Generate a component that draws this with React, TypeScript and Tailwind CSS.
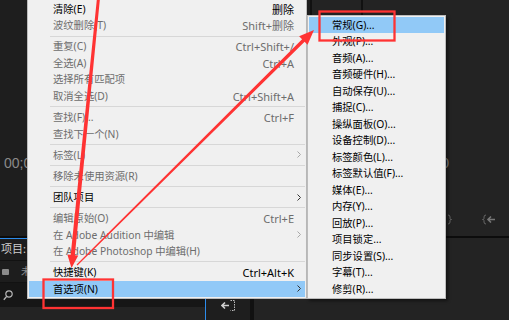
import React from 'react';

type Row = { label: string; shortcut?: string; disabled?: boolean; sub?: boolean; active?: boolean } | 'sep';

const editMenu: Row[] = [
  { label: '清除(E)', shortcut: '删除' },
  { label: '波纹删除(T)', shortcut: 'Shift+删除', disabled: true },
  'sep',
  { label: '重复(C)', shortcut: 'Ctrl+Shift+/', disabled: true },
  { label: '全选(A)', shortcut: 'Ctrl+A', disabled: true },
  { label: '选择所有匹配项', disabled: true },
  { label: '取消全选(D)', shortcut: 'Ctrl+Shift+A', disabled: true },
  'sep',
  { label: '查找(F)...', shortcut: 'Ctrl+F', disabled: true },
  { label: '查找下一个(N)', disabled: true },
  'sep',
  { label: '标签(L)', sub: true, disabled: true },
  'sep',
  { label: '移除未使用资源(R)', disabled: true },
  'sep',
  { label: '团队项目', sub: true },
  'sep',
  { label: '编辑原始(O)', shortcut: 'Ctrl+E', disabled: true },
  { label: '在 Adobe Audition 中编辑', sub: true, disabled: true },
  { label: '在 Adobe Photoshop 中编辑(H)', disabled: true },
  'sep',
  { label: '快捷键(K)', shortcut: 'Ctrl+Alt+K' },
  { label: '首选项(N)', sub: true, active: true },
];

const prefs = [
  '常规(G)...',
  '外观(P)...',
  '音频(A)...',
  '音频硬件(H)...',
  '自动保存(U)...',
  '捕捉(C)...',
  '操纵面板(O)...',
  '设备控制(D)...',
  '标签颜色(L)...',
  '标签默认值(F)...',
  '媒体(E)...',
  '内存(Y)...',
  '回放(P)...',
  '项目锁定...',
  '同步设置(S)...',
  '字幕(T)...',
  '修剪(R)...',
];

const Chevron = ({ dim }: { dim?: boolean }) => (
  <svg width="4" height="7" viewBox="0 0 4 7" className="block">
    <path d="M0.5 0.5 L3.5 3.5 L0.5 6.5" fill="none" stroke={dim ? '#a8a8a8' : '#333'} strokeWidth="1" />
  </svg>
);

// tapered annotation arrow, computed from its two ends
const arrowPoints = (x1: number, y1: number, x2: number, y2: number, w1: number, w2: number, hl: number, hw: number) => {
  const len = Math.hypot(x2 - x1, y2 - y1);
  const ux = (x2 - x1) / len;
  const uy = (y2 - y1) / len;
  const nx = -uy;
  const ny = ux;
  const bx = x2 - ux * hl;
  const by = y2 - uy * hl;
  const p = (x: number, y: number, w: number, s: number) => `${x + s * nx * w / 2},${y + s * ny * w / 2}`;
  return [
    p(x1, y1, w1, 1),
    p(bx, by, w2, 1),
    p(bx, by, hw, 1),
    `${x2},${y2}`,
    p(bx, by, hw, -1),
    p(bx, by, w2, -1),
    p(x1, y1, w1, -1),
  ].join(' ');
};

export default function App() {
  return (
    <div className="relative w-[509px] h-[320px] overflow-hidden bg-[#111] font-['Noto_Sans','Noto_Sans_CJK_SC',sans-serif]">
      {/* Premiere workspace behind the menus */}
      <div className="flex flex-col h-full">
        <div className="flex h-[236px]">
          {/* source monitor */}
          <div className="w-[310px] bg-[#1e1e1e] pt-[153px] pl-[4px] text-[14px] text-[#8a8a8a] font-['Liberation_Sans',sans-serif]">
            00;00;00;00
          </div>
          <div className="w-[2px] bg-[#111]" />
          <div className="w-[49px] bg-[#232323]" />
          <div className="w-[2px] bg-[#111]" />
          {/* program monitor */}
          <div className="flex-1 bg-[#232323] flex flex-col">
            <div className="pt-[153px] pl-[12px] text-[14px] text-[#8a8a8a] font-['Liberation_Sans',sans-serif]">
              00;00;00;00
            </div>
            <div className="mt-auto mb-[11px] flex items-center pl-[84px] gap-[30px] text-[#6a6a6a]">
              <svg width="5" height="11" viewBox="0 0 5 11">
                <path d="M1 1 Q3 1 3 3 L3 4.5 Q3 5.5 4.5 5.5 Q3 5.5 3 6.5 L3 8 Q3 10 1 10" fill="none" stroke="#666" strokeWidth="1" />
              </svg>
              <svg width="14" height="11" viewBox="0 0 14 11">
                <path d="M4 1 Q2 1 2 3 L2 4.5 Q2 5.5 0.5 5.5 Q2 5.5 2 6.5 L2 8 Q2 10 4 10" fill="none" stroke="#666" strokeWidth="1" />
                <path d="M6 5.5 L13 5.5 M9 2.5 L6 5.5 L9 8.5" fill="none" stroke="#777" strokeWidth="1.6" />
              </svg>
            </div>
          </div>
        </div>
        <div className="h-[2px] bg-[#0c0c0c]" />
        <div className="flex flex-1">
          {/* project panel */}
          <div className="w-[205px] flex flex-col bg-[#1d1d1d] border-t border-[#2d8ceb]">
            <div className="h-[22px] flex items-center text-[11px] text-[#cfcfcf] border-b border-[#121212] pl-[1px]">
              项目: 未命名
            </div>
            <div className="h-[22px] flex items-center gap-[12px] pl-[2px] border-b border-[#121212]">
              <div className="w-[7px] h-[6px] rounded-[1px] bg-[#8a8a8a]" />
              <span className="text-[10px] text-[#8a8a8a]">未命名.prproj</span>
            </div>
            <div className="h-[24px] bg-[#161616] flex items-center pl-[3px]">
              <svg width="10" height="11" viewBox="0 0 10 11">
                <circle cx="6" cy="4" r="3.2" fill="none" stroke="#b5b5b5" strokeWidth="1.2" />
                <path d="M3.7 6.4 L0.8 9.8" stroke="#b5b5b5" strokeWidth="1.4" />
              </svg>
            </div>
            <div className="flex-1 bg-[#232323]" />
          </div>
          <div className="w-[1px] bg-[#2d8ceb]" />
          {/* tools */}
          <div className="w-[44px] bg-[#1e1e1e] flex justify-center pt-[62px]">
            <svg width="14" height="11" viewBox="0 0 14 11">
              <path d="M9.5 0.5 H13.5 V10.5 H9.5" fill="none" stroke="#bbb" strokeWidth="1" strokeDasharray="1.5 1" />
              <path d="M1 5.5 H8 M4 2.5 L1 5.5 L4 8.5" fill="none" stroke="#cfcfcf" strokeWidth="1.6" />
            </svg>
          </div>
          <div className="w-[4px] bg-[#111]" />
          {/* timeline */}
          <div className="flex-1 bg-[#232323]" />
        </div>
      </div>

      {/* Edit menu */}
      <div className="absolute left-[27px] top-0 w-[280px] pt-[0.75px] pb-[0.75px] px-[1px] bg-[#f0f0f0] border-l border-r border-b border-[#bcbcbc] text-[10.3px] leading-none">
        {editMenu.map((r, i) =>
          r === 'sep' ? (
            <div key={i} className="h-[4.64px] flex items-center pl-[21px]">
              <div className="h-[1px] w-full bg-[#d7d7d7]" />
            </div>
          ) : (
            <div
              key={i}
              className={`h-[16.5px] flex items-center pl-[24px] ${r.active ? 'bg-[#91c9f7]' : ''} ${r.disabled ? 'text-[#6d6d6d]' : 'text-[#000]'}`}
            >
              <span className="flex-1 whitespace-nowrap">{r.label}</span>
              {r.shortcut && <span className="text-[11px] whitespace-nowrap">{r.shortcut}</span>}
              <span className="w-[11px] flex justify-end pr-[4px]">{r.sub && <Chevron dim={r.disabled} />}</span>
            </div>
          )
        )}
      </div>

      {/* Preferences submenu */}
      <div className="absolute left-[307px] top-[15px] w-[139px] pt-[0.75px] pb-[0.75px] px-[1px] bg-[#f0f0f0] border border-[#bcbcbc] shadow-[2px_2px_3px_rgba(0,0,0,0.45)] text-[10.3px] leading-none text-black">
        {prefs.map((p, i) => (
          <div key={p} className={`h-[16.5px] flex items-center pl-[23px] whitespace-nowrap ${i === 0 ? 'bg-[#91c9f7]' : ''}`}>
            {p}
          </div>
        ))}
      </div>

      {/* red annotations */}
      <svg className="absolute inset-0 pointer-events-none" width="509" height="320" viewBox="0 0 509 320">
        <rect x="319.5" y="11.5" width="75" height="29" fill="none" stroke="#f33" strokeWidth="2.3" />
        <rect x="43.5" y="279.5" width="69.5" height="28.5" fill="none" stroke="#f33" strokeWidth="2.3" />
        <polygon points={arrowPoints(98.5, -2, 71.5, 268, 3, 4.2, 13, 11)} fill="#f33" />
        <polygon points={arrowPoints(77, 265, 314, 30, 1.2, 3.6, 15, 12)} fill="#f33" />
      </svg>
    </div>
  );
}
